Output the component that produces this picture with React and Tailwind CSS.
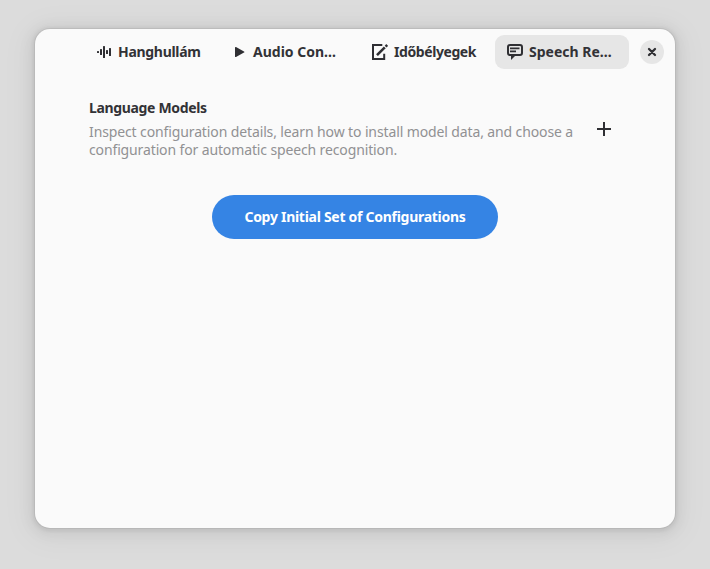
function WaveIcon() {
  return (
    <svg className="size-4 shrink-0" viewBox="0 0 16 16" fill="#2f2f33">
      <rect x="1" y="7" width="2" height="2" rx=".5" />
      <rect x="4" y="5" width="2" height="6" rx=".5" />
      <rect x="7" y="2" width="2" height="12" rx=".5" />
      <rect x="10" y="6" width="2" height="4" rx=".5" />
      <rect x="13" y="4" width="2" height="8" rx=".5" />
    </svg>
  );
}

function PlayIcon() {
  return (
    <svg className="size-4 shrink-0" viewBox="0 0 16 16" fill="#2f2f33">
      <path d="M4 3.6c0-.5.6-.8 1-.5l8 4.3c.5.3.5.9 0 1.2L5 12.9c-.4.3-1 0-1-.5z" />
    </svg>
  );
}

function EditIcon() {
  return (
    <svg className="size-4 shrink-0" viewBox="0 0 16 16" fill="none" stroke="#2f2f33" strokeWidth="2">
      <path d="M10.3 1H1v14h11.2V9.8" />
      <path d="M5 11.2 12.8 3.4" strokeWidth="2.6" />
      <path d="M13.6 2.6 15.2 1" strokeWidth="2.6" />
    </svg>
  );
}

function SpeechIcon() {
  return (
    <svg className="size-4 shrink-0" viewBox="0 0 16 16" fill="none" stroke="#2f2f33" strokeWidth="2">
      <path d="M3 1h10a2 2 0 0 1 2 2v6a2 2 0 0 1-2 2H3a2 2 0 0 1-2-2V3a2 2 0 0 1 2-2z" />
      <path d="M4 10v6l5-5z" fill="#2f2f33" stroke="none" />
      <path d="M3 4.3h9.5M3 7.3h6" strokeWidth="1.7" />
    </svg>
  );
}

function Tab({ icon, label, className, textClass }) {
  return (
    <button className={`flex h-[34px] w-[134px] shrink-0 items-center gap-1.5 rounded-[9px] ${className}`}>
      {icon}
      <span className={`whitespace-nowrap text-sm font-bold leading-[18px] ${textClass}`}>{label}</span>
    </button>
  );
}

export default function App() {
  return (
    <div className="h-[569px] w-[710px] overflow-hidden bg-[#dcdcdc] px-[35px] pt-[29px] font-['Noto_Sans','Open_Sans',sans-serif] text-[#323236]">
      <main className="h-[499px] w-[640px] rounded-[15px] bg-[#fafafa] shadow-[0_0_0_1px_rgba(0,0,0,0.05),0_1px_3px_3px_rgba(0,0,0,0.05),0_2px_14px_5px_rgba(0,0,0,0.05),0_4px_28px_12px_rgba(0,0,0,0.03)]">
        <header className="flex h-[46px] items-center pl-[47px]">
          <Tab icon={<WaveIcon />} label="Hanghullám" className="pl-3.5" textClass="tracking-[-0.3px]" />
          <Tab icon={<PlayIcon />} label="Audio Con…" className="ml-[3px] pl-3" textClass="tracking-[0px]" />
          <Tab icon={<EditIcon />} label="Időbélyegek" className="ml-1 pl-[15px]" textClass="tracking-[-0.42px]" />
          <Tab icon={<SpeechIcon />} label="Speech Re…" className="ml-1 bg-[#e6e6e6] pl-3" textClass="tracking-[0px]" />
          <button aria-label="Close" className="ml-[11px] flex size-6 items-center justify-center rounded-full bg-[#e6e6e6]">
            <svg className="size-4" viewBox="0 0 16 16" fill="none" stroke="#2f2f33" strokeWidth="2.3" strokeLinecap="round">
              <path d="m5 5 6 6M11 5l-6 6" />
            </svg>
          </button>
        </header>
        <section className="flex pl-[54px] pt-6">
          <div className="w-[500px]">
            <h1 className="text-sm font-bold leading-[18px]"><span className="tracking-[-0.34px]">Language Models</span></h1>
            <p className="mt-1.5 whitespace-nowrap text-sm leading-[18px] text-[#919193]">
              <span className="tracking-[-0.12px]">Inspect configuration details, learn how to install model data, and choose a</span>
              <br />
              <span className="tracking-[-0.13px]">configuration for automatic speech recognition.</span>
            </p>
          </div>
          <button aria-label="Add" className="ml-[7px] mt-[22px] size-4">
            <svg className="size-4" viewBox="0 0 16 16" fill="#2f2f33">
              <path d="M7 1h2v6h6v2H9v6H7V9H1V7h6z" />
            </svg>
          </button>
        </section>
        <div className="flex justify-center pt-9">
          <button className="h-11 w-[286px] whitespace-nowrap rounded-full bg-[#3584e4] text-sm font-bold text-white">
            <span className="tracking-[-0.28px]">Copy Initial Set of Configurations</span>
          </button>
        </div>
      </main>
    </div>
  );
}
